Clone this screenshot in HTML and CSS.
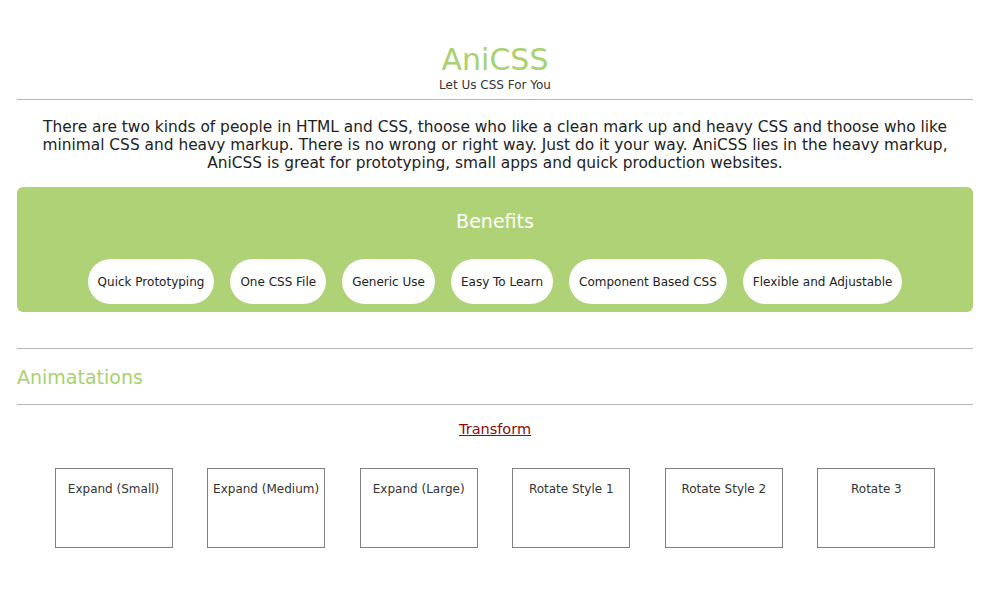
FILE: index.html
```html
<!DOCTYPE html>
<html lang="en">
<head>
<meta charset="utf-8">
<title>AniCSS</title>
<link rel="stylesheet" href="styles.css">
</head>
<body>
<div class="page">
  <header class="header">
    <h1 class="brand">AniCSS</h1>
    <p class="tagline">Let Us CSS For You</p>
  </header>
  <hr class="rule">
  <p class="intro">There are two kinds of people in HTML and CSS, thoose who like a clean mark up and heavy CSS and thoose who like<br>minimal CSS and heavy markup. There is no wrong or right way. Just do it your way. AniCSS lies in the heavy markup,<br>AniCSS is great for prototyping, small apps and quick production websites.</p>
  <section class="benefits">
    <h2 class="benefits-title">Benefits</h2>
    <ul class="pills">
      <li class="pill">Quick Prototyping</li>
      <li class="pill">One CSS File</li>
      <li class="pill">Generic Use</li>
      <li class="pill">Easy To Learn</li>
      <li class="pill">Component Based CSS</li>
      <li class="pill">Flexible and Adjustable</li>
    </ul>
  </section>
  <hr class="rule rule-section">
  <h2 class="section-title">Animatations</h2>
  <hr class="rule">
  <div class="sub-title"><a class="sub-link" href="#">Transform</a></div>
  <div class="demos">
    <div class="demo">Expand (Small)</div>
    <div class="demo">Expand (Medium)</div>
    <div class="demo">Expand (Large)</div>
    <div class="demo">Rotate Style 1</div>
    <div class="demo">Rotate Style 2</div>
    <div class="demo">Rotate 3</div>
  </div>
</div>
</body>
</html>
```

FILE: styles.css
```css
html, body {
  margin: 0;
  padding: 0;
  background: #ffffff;
}
body {
  font-family: "DejaVu Sans", "Open Sans", sans-serif;
  color: #222222;
}
.page {
  width: 956px;
  margin-left: 17px;
}
.header {
  padding-top: 43px;
  text-align: center;
}
.brand {
  margin: 0;
  font-size: 30px;
  line-height: 34px;
  font-weight: 400;
  color: #a9d170;
}
.tagline {
  margin: 0;
  font-size: 12px;
  line-height: 16px;
  color: #333333;
}
.rule {
  border: 0;
  border-top: 1px solid #b8b8b8;
  margin: 6px 0 0 0;
  height: 0;
}
.intro {
  margin: 18px 0 0 0;
  font-size: 15.4px;
  line-height: 18px;
  text-align: center;
  color: #222222;
}
.benefits {
  margin-top: 15px;
  background: #afd277;
  border-radius: 6px;
  padding: 22px 0 8px 0;
  text-align: center;
}
.benefits-title {
  margin: 0;
  font-size: 19px;
  line-height: 24px;
  font-weight: 400;
  color: #ffffff;
}
.pills {
  list-style: none;
  margin: 26px 0 0 0;
  padding: 0;
  display: flex;
  justify-content: center;
  gap: 16px;
}
.pill {
  background: #ffffff;
  height: 45px;
  border-radius: 23px;
  padding: 0 10px;
  display: flex;
  align-items: center;
  font-size: 12px;
  color: #222222;
}
.rule-section {
  margin-top: 36px;
}
.section-title {
  margin: 16px 0 0 0;
  font-size: 19px;
  line-height: 24px;
  font-weight: 400;
  color: #a9d170;
}
.section-title + .rule {
  margin-top: 15px;
}
.sub-title {
  margin-top: 15px;
  text-align: center;
  font-size: 14.5px;
  line-height: 18px;
}
.sub-link {
  color: #8b0a0a;
  text-decoration: underline;
}
.demos {
  margin-top: 30px;
  padding: 0 3px;
  display: flex;
  justify-content: space-evenly;
}
.demo {
  box-sizing: border-box;
  width: 118px;
  height: 80px;
  border: 1px solid #808080;
  padding-top: 12px;
  text-align: center;
  font-size: 12px;
  line-height: 16px;
  color: #333333;
}
```
